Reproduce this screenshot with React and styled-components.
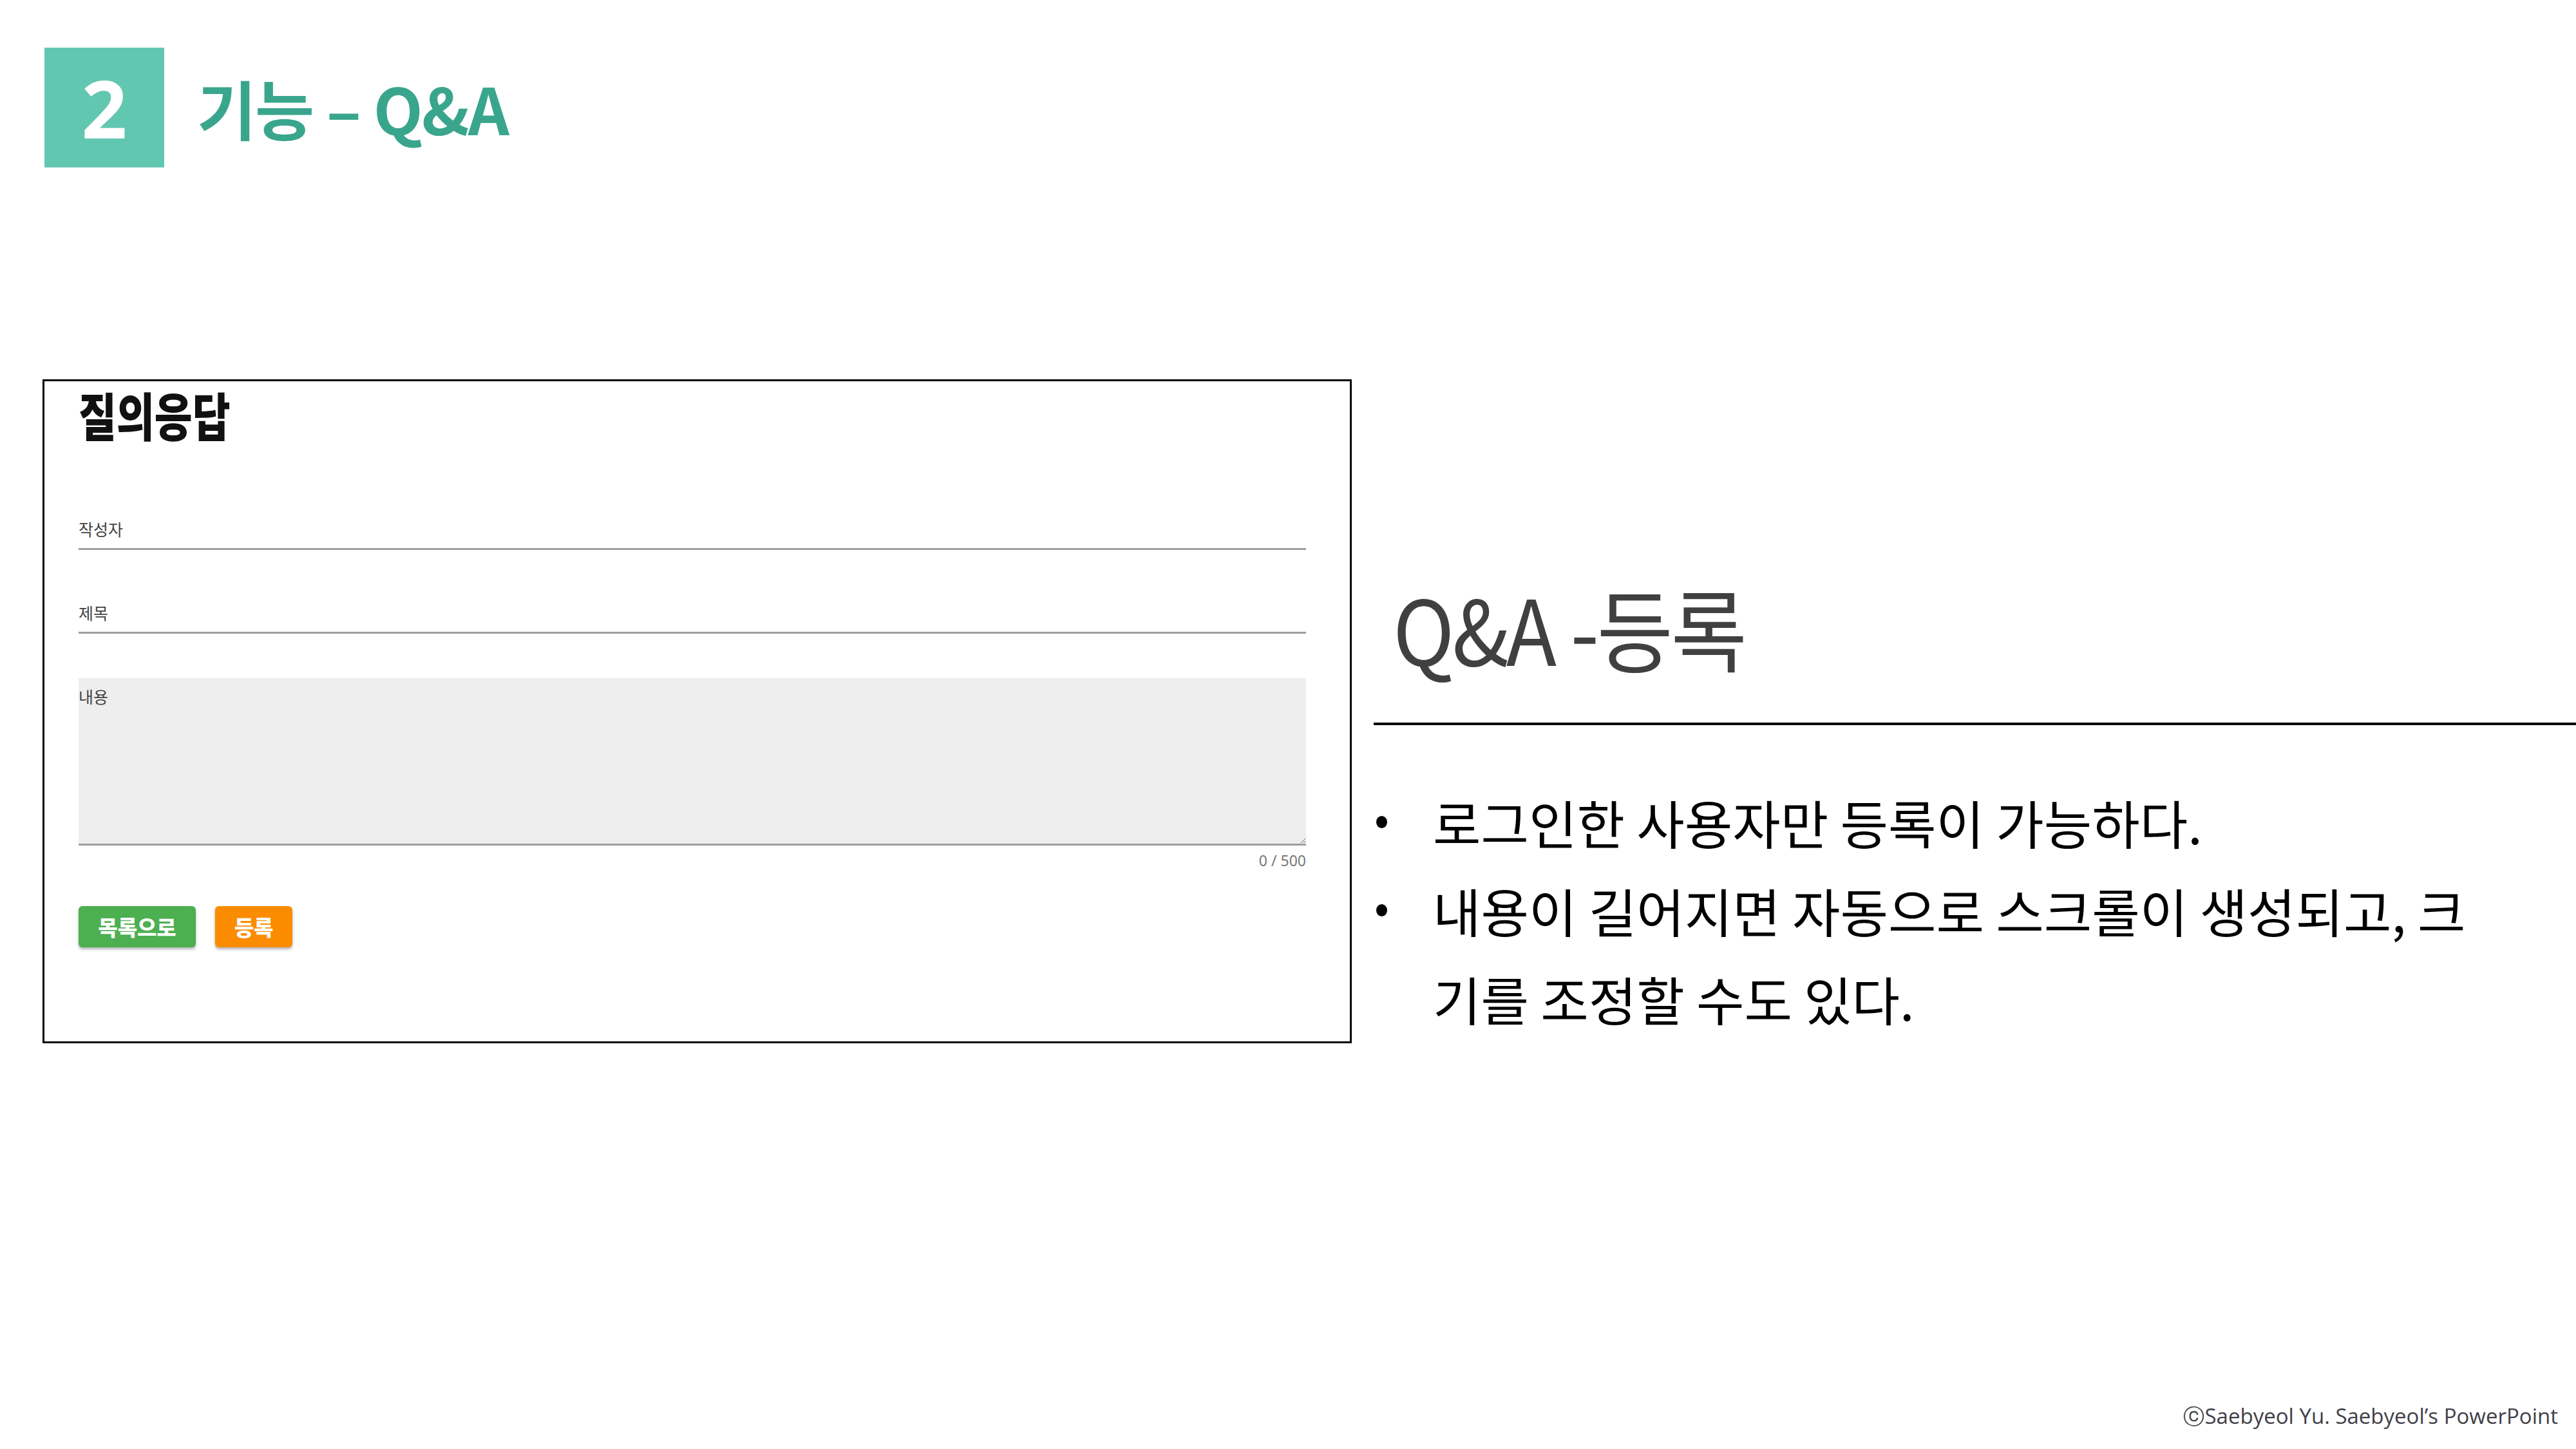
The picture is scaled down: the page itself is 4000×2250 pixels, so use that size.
import React from "react";
import styled, { createGlobalStyle } from "styled-components";

const GlobalStyle = createGlobalStyle`
  html, body {
    margin: 0;
    padding: 0;
    background: #ffffff;
  }
  body {
    font-family: "Noto Sans CJK KR", "Noto Sans", sans-serif;
  }
`;

const Slide = styled.div`
  width: 4000px;
  height: 2250px;
  display: flex;
  flex-direction: column;
  background: #ffffff;
  overflow: hidden;
`;

const Header = styled.header`
  display: flex;
  align-items: center;
  gap: 51px;
  padding: 74px 0 0 69px;
`;

const NumberBox = styled.div`
  width: 186px;
  height: 186px;
  background: #62c7b0;
  color: #ffffff;
  display: flex;
  align-items: center;
  justify-content: center;
  font-family: "Noto Sans", sans-serif;
  font-weight: 700;
  font-size: 124px;
  line-height: 1;
`;

const HeaderTitle = styled.h1`
  margin: 0;
  color: #3aa58d;
  font-size: 100px;
  font-weight: 700;
  line-height: 1.2;
  letter-spacing: -2px;
`;

const Content = styled.main`
  display: flex;
  margin-top: 329px;
`;

const FormPanel = styled.section`
  margin-left: 66px;
  width: 2033px;
  height: 1031px;
  box-sizing: border-box;
  border: 3px solid #000000;
  padding: 2px 68px 0 53px;
  display: flex;
  flex-direction: column;
`;

const FormTitle = styled.h2`
  margin: 0;
  font-size: 80px;
  font-weight: 900;
  line-height: 1.2;
  color: #111111;
  transform: scaleX(0.8);
  transform-origin: left center;
`;

const Field = styled.label`
  display: block;
  height: 49px;
  border-bottom: 3px solid #9e9e9e;
  color: #444444;
  font-size: 25px;
  line-height: 38px;
  margin-top: ${(props) => props.gap}px;
`;

const AreaWrap = styled.div`
  position: relative;
  margin-top: 69px;
`;

const AreaLabel = styled.span`
  position: absolute;
  left: 0;
  top: 9px;
  color: #444444;
  font-size: 25px;
  line-height: 38px;
  pointer-events: none;
`;

const TextArea = styled.textarea`
  display: block;
  width: 100%;
  height: 260px;
  box-sizing: border-box;
  margin: 0;
  border: none;
  border-bottom: 3px solid #9e9e9e;
  background: #eeeeee;
  resize: vertical;
  outline: none;
`;

const Counter = styled.div`
  text-align: right;
  color: #777777;
  font-family: "Noto Sans", sans-serif;
  font-size: 23px;
  line-height: 28px;
  margin-top: 9px;
`;

const ButtonRow = styled.div`
  display: flex;
  gap: 30px;
  margin-top: 57px;
`;

const Button = styled.button`
  height: 64px;
  width: ${(props) => props.w}px;
  border: none;
  border-radius: 6px;
  background: ${(props) => props.bg};
  color: #ffffff;
  font-family: "Noto Sans CJK KR", sans-serif;
  font-weight: 900;
  font-size: 33px;
  box-shadow: 0 3px 4px rgba(0, 0, 0, 0.3);
  cursor: pointer;
`;

const InfoPanel = styled.section`
  flex: 1;
  margin-left: 34px;
  padding-top: 300px;
  display: flex;
  flex-direction: column;
`;

const InfoTitle = styled.h2`
  margin: 0 0 0 30px;
  font-size: 140px;
  font-weight: 400;
  line-height: 1.2;
  color: #404040;
  letter-spacing: -4px;
  transform: scaleX(0.92);
  transform-origin: left center;
`;

const Rule = styled.hr`
  margin: 65px 0 0 0;
  border: none;
  border-top: 4px solid #000000;
`;

const BulletList = styled.ul`
  list-style: none;
  margin: 81px 0 0 0;
  padding: 0;
  width: 1740px;
`;

const BulletItem = styled.li`
  position: relative;
  padding-left: 92px;
  font-size: 81px;
  line-height: 137px;
  color: #000000;
  &::before {
    content: "";
    position: absolute;
    left: 4px;
    top: 60px;
    width: 17px;
    height: 19px;
    border-radius: 50%;
    background: #000000;
  }
`;

const Footer = styled.footer`
  margin-top: auto;
  align-self: flex-end;
  padding: 0 28px 28px 0;
  font-family: "Open Sans", sans-serif;
  font-size: 33px;
  line-height: 46px;
  color: #404048;
`;

export default function App() {
  return (
    <>
      <GlobalStyle />
      <Slide>
        <Header>
          <NumberBox>2</NumberBox>
          <HeaderTitle>기능 – Q&amp;A</HeaderTitle>
        </Header>
        <Content>
          <FormPanel>
            <FormTitle>질의응답</FormTitle>
            <Field gap={112}>작성자</Field>
            <Field gap={78}>제목</Field>
            <AreaWrap>
              <AreaLabel>내용</AreaLabel>
              <TextArea />
            </AreaWrap>
            <Counter>0 / 500</Counter>
            <ButtonRow>
              <Button w={182} bg="#4caf50">
                목록으로
              </Button>
              <Button w={120} bg="#fb8c00">
                등록
              </Button>
            </ButtonRow>
          </FormPanel>
          <InfoPanel>
            <InfoTitle>Q&amp;A -등록</InfoTitle>
            <Rule />
            <BulletList>
              <BulletItem>로그인한 사용자만 등록이 가능하다.</BulletItem>
              <BulletItem>
                내용이 길어지면 자동으로 스크롤이 생성되고, 크기를 조정할 수도
                있다.
              </BulletItem>
            </BulletList>
          </InfoPanel>
        </Content>
        <Footer>ⓒSaebyeol Yu. Saebyeol’s PowerPoint</Footer>
      </Slide>
    </>
  );
}
